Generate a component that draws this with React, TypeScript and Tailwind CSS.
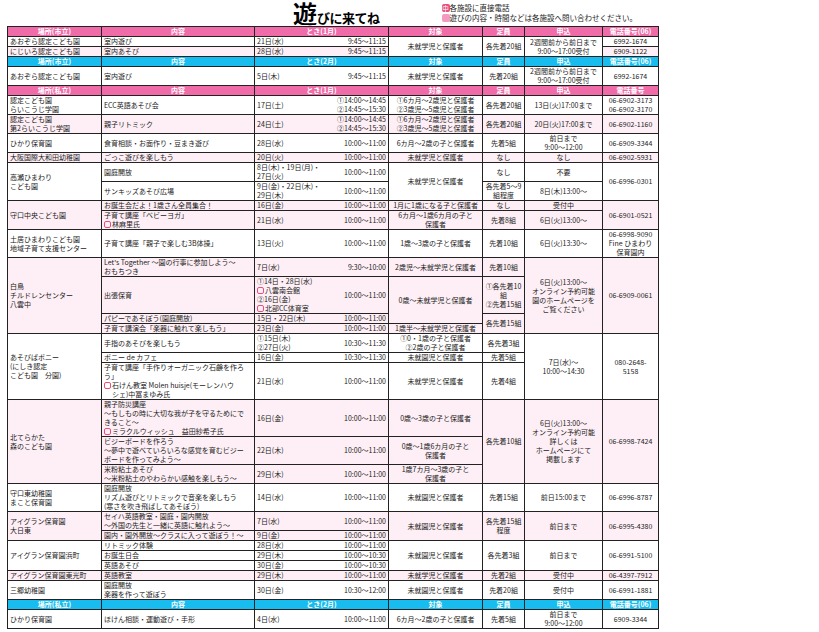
import React from 'react';

type Align = 'l' | 'c' | 'r';

// one table cell, every border black
function C({
  children,
  rs,
  cs,
  a = 'l',
  x = '',
}: {
  children?: React.ReactNode;
  rs?: number;
  cs?: number;
  a?: Align;
  x?: string;
}) {
  const al = a === 'c' ? 'text-center' : a === 'r' ? 'text-right' : 'text-left';
  return (
    <td
      rowSpan={rs}
      colSpan={cs}
      className={`border border-[#222] px-[2px] py-0 align-middle ${al} ${x}`}
    >
      {children}
    </td>
  );
}

// date + time share the "とき" column, no line between them
const D = ({ children }: { children: React.ReactNode }) => (
  <C x="border-r-0 whitespace-nowrap overflow-visible">{children}</C>
);
const T = ({ children }: { children: React.ReactNode }) => (
  <C a="r" x="border-l-0 whitespace-nowrap">
    {children}
  </C>
);

// little pink box in front of a lecturer / venue
const M = () => (
  <span className="mr-[1px] inline-block h-[7px] w-[7px] rounded-[2px] border border-[#e94f7d] align-[-1px]" />
);

function Head({ cyan, place, month, tel }: { cyan?: boolean; place: string; month: string; tel: string }) {
  const th = cyan
    ? 'border border-[#222] bg-[#18bcee] py-0 text-center font-bold text-white'
    : 'border border-[#222] bg-[#f06ca8] py-0 text-center font-bold text-white';
  return (
    <tr>
      <th className={th}>{place}</th>
      <th className={th}>内容</th>
      <th colSpan={2} className={th}>
        とき({month})
      </th>
      <th className={th}>対象</th>
      <th className={th}>定員</th>
      <th className={th}>申込</th>
      <th className={th}>{tel}</th>
    </tr>
  );
}

const P = 'bg-[#fdeff5]';

export default function App() {
  return (
    <div className="h-[632px] w-[819px] overflow-hidden bg-white pl-[7px] font-['Noto_Sans_CJK_JP',sans-serif] text-[#222]">
      <div className="flex h-[26px] items-start">
        <div className="ml-[286px] flex h-[25px] items-end font-bold text-black">
          <span className="text-[24px] leading-[24px]">遊</span>
          <span className="text-[13px] leading-[14px] tracking-[-0.5px]">びに来てね</span>
        </div>
        <div className="ml-[62px] mt-[4px] flex flex-col gap-[2px] text-[7.5px] leading-[8px]">
          <div className="flex items-center">
            <span className="flex h-[8px] w-[8px] items-center justify-center rounded-[2px] bg-[#e94f7d] text-[6.5px] text-white">
              中
            </span>
            <span>各施設に直接電話</span>
          </div>
          <div className="flex items-center">
            <span className="h-[8px] w-[8px] rounded-[2px] bg-[#f49ac0]" />
            <span>遊びの内容・時間などは各施設へ問い合わせください。</span>
          </div>
        </div>
      </div>

      <table className="w-[651px] table-fixed border-collapse text-[7px] leading-[9px]">
        <colgroup>
          <col className="w-[94px]" />
          <col className="w-[153px]" />
          <col className="w-[56px]" />
          <col className="w-[78px]" />
          <col className="w-[94px]" />
          <col className="w-[42px]" />
          <col className="w-[78px]" />
          <col className="w-[56px]" />
        </colgroup>
        <tbody>
          <Head place="場所(市立)" month="1月" tel="電話番号(06)" />
          <tr>
            <C>あおぞら認定こども園</C>
            <C>室内遊び</C>
            <D>21日(水)</D>
            <T>9:45～11:15</T>
            <C rs={2} a="c" x="bg-white">未就学児と保護者</C>
            <C rs={2} a="c" x="bg-white">各先着20組</C>
            <C rs={2} a="c" x="bg-white">
              2週間前から前日まで
              <br />
              9:00～17:00受付
            </C>
            <C a="c">6992-1674</C>
          </tr>
          <tr className={P}>
            <C>にじいろ認定こども園</C>
            <C>室内あそび</C>
            <D>28日(水)</D>
            <T>9:45～11:15</T>
            <C a="c">6909-1122</C>
          </tr>

          <Head cyan place="場所(市立)" month="2月" tel="電話番号(06)" />
          <tr>
            <C>あおぞら認定こども園</C>
            <C>室内遊び</C>
            <D>5日(木)</D>
            <T>9:45～11:15</T>
            <C a="c">未就学児と保護者</C>
            <C a="c">先着20組</C>
            <C a="c">
              2週間前から前日まで
              <br />
              9:00～17:00受付
            </C>
            <C a="c">6992-1674</C>
          </tr>

          <Head place="場所(私立)" month="1月" tel="電話番号" />
          <tr>
            <C>
              認定こども園
              <br />
              らいこうじ学園
            </C>
            <C>ECC英語あそび会</C>
            <D>17日(土)</D>
            <T>
              ①14:00～14:45
              <br />
              ②14:45～15:30
            </T>
            <C a="c">
              ①6カ月～2歳児と保護者
              <br />
              ②3歳児～5歳児と保護者
            </C>
            <C a="c">各先着20組</C>
            <C a="c">13日(火)17:00まで</C>
            <C a="c">
              06-6902-3173
              <br />
              06-6902-3170
            </C>
          </tr>
          <tr className={P}>
            <C>
              認定こども園
              <br />
              第2らいこうじ学園
            </C>
            <C>親子リトミック</C>
            <D>24日(土)</D>
            <T>
              ①14:00～14:45
              <br />
              ②14:45～15:30
            </T>
            <C a="c">
              ①6カ月～2歳児と保護者
              <br />
              ②3歳児～5歳児と保護者
            </C>
            <C a="c">各先着20組</C>
            <C a="c">20日(火)17:00まで</C>
            <C a="c">06-6902-1160</C>
          </tr>
          <tr>
            <C>ひかり保育園</C>
            <C>食育相談・お面作り・豆まき遊び</C>
            <D>28日(水)</D>
            <T>10:00～11:00</T>
            <C a="c">6カ月～2歳の子と保護者</C>
            <C a="c">先着5組</C>
            <C a="c">
              前日まで
              <br />
              9:00～12:00
            </C>
            <C a="c">06-6909-3344</C>
          </tr>
          <tr className={P}>
            <C>大阪国際大和田幼稚園</C>
            <C>ごっこ遊びを楽しもう</C>
            <D>20日(火)</D>
            <T>10:00～11:00</T>
            <C a="c">未就学児と保護者</C>
            <C a="c">なし</C>
            <C a="c">なし</C>
            <C a="c">06-6902-5931</C>
          </tr>
          <tr>
            <C rs={2}>
              高瀬ひまわり
              <br />
              こども園
            </C>
            <C>園庭開放</C>
            <D>
              8日(木)・19日(月)・
              <br />
              27日(火)
            </D>
            <T>10:00～11:00</T>
            <C rs={2} a="c">未就学児と保護者</C>
            <C a="c">なし</C>
            <C a="c">不要</C>
            <C rs={2} a="c">06-6996-0301</C>
          </tr>
          <tr>
            <C>サンキッズあそび広場</C>
            <D>
              9日(金)・22日(木)・
              <br />
              29日(木)
            </D>
            <T>10:00～11:00</T>
            <C a="c">
              各先着5～9
              <br />
              組程度
            </C>
            <C a="c">8日(木)13:00～</C>
          </tr>
          <tr className={P}>
            <C rs={2}>守口中央こども園</C>
            <C>お誕生会だよ！1歳さん全員集合！</C>
            <D>16日(金)</D>
            <T>10:00～11:00</T>
            <C a="c">1月に1歳になる子と保護者</C>
            <C a="c">なし</C>
            <C a="c">受付中</C>
            <C rs={2} a="c">06-6901-0521</C>
          </tr>
          <tr className={P}>
            <C>
              子育て講座「ベビーヨガ」
              <br />
              <M />
              林麻里氏
            </C>
            <D>21日(水)</D>
            <T>10:00～11:00</T>
            <C a="c">
              6カ月～1歳6カ月の子と
              <br />
              保護者
            </C>
            <C a="c">先着8組</C>
            <C a="c">6日(火)13:00～</C>
          </tr>
          <tr>
            <C>
              土居ひまわりこども園
              <br />
              地域子育て支援センター
            </C>
            <C>子育て講座「親子で楽しむ3B体操」</C>
            <D>13日(火)</D>
            <T>10:00～11:00</T>
            <C a="c">1歳～3歳の子と保護者</C>
            <C a="c">先着10組</C>
            <C a="c">6日(火)13:30～</C>
            <C a="c">
              06-6998-9090
              <br />
              Fine ひまわり
              <br />
              保育園内
            </C>
          </tr>
          <tr className={P}>
            <C rs={4}>
              白鳥
              <br />
              チルドレンセンター
              <br />
              八雲中
            </C>
            <C>
              Let's Together ～園の行事に参加しよう～
              <br />
              おもちつき
            </C>
            <D>7日(水)</D>
            <T>9:30～10:00</T>
            <C a="c">2歳児～未就学児と保護者</C>
            <C a="c">先着10組</C>
            <C rs={4} a="c">
              6日(火)13:00～
              <br />
              オンライン予約可能
              <br />
              園のホームページを
              <br />
              ご覧ください
            </C>
            <C rs={4} a="c">06-6909-0061</C>
          </tr>
          <tr className={P}>
            <C>出張保育</C>
            <D>
              ①14日・28日(水)
              <br />
              <M />
              八雲南会館
              <br />
              ②16日(金)
              <br />
              <M />
              北部CC体育室
            </D>
            <T>10:00～11:00</T>
            <C rs={2} a="c">0歳～未就学児と保護者</C>
            <C a="c">
              ①各先着10
              <br />
              組
              <br />
              ②先着15組
            </C>
          </tr>
          <tr className={P}>
            <C>パピーであそぼう(園庭開放)</C>
            <D>15日・22日(木)</D>
            <T>10:00～11:00</T>
            <C rs={2} a="c">各先着15組</C>
          </tr>
          <tr className={P}>
            <C>子育て講演会「楽器に触れて楽しもう」</C>
            <D>23日(金)</D>
            <T>10:00～11:00</T>
            <C a="c">1歳半～未就学児と保護者</C>
          </tr>
          <tr>
            <C rs={3}>
              あそびばポニー
              <br />
              (にしき認定
              <br />
              こども園　分園)
            </C>
            <C>手指のあそびを楽しもう</C>
            <D>
              ①15日(木)
              <br />
              ②27日(火)
            </D>
            <T>10:30～11:30</T>
            <C a="c">
              ①0・1歳の子と保護者
              <br />
              ②2歳の子と保護者
            </C>
            <C a="c">各先着3組</C>
            <C rs={3} a="c">
              7日(水)～
              <br />
              10:00～14:30
            </C>
            <C rs={3} a="c">
              080-2648-
              <br />
              5158
            </C>
          </tr>
          <tr>
            <C>ポニー de カフェ</C>
            <D>16日(金)</D>
            <T>10:30～11:30</T>
            <C a="c">未就園児と保護者</C>
            <C a="c">先着5組</C>
          </tr>
          <tr>
            <C>
              子育て講座「手作りオーガニック石鹸を作ろ
              <br />
              う」
              <br />
              <M />
              石けん教室 Molen huisje(モーレンハウ
              <br />
              <span className="pl-[8px]">シェ)中冨まゆみ氏</span>
            </C>
            <D>21日(水)</D>
            <T>10:00～11:00</T>
            <C a="c">未就学児と保護者</C>
            <C a="c">先着4組</C>
          </tr>
          <tr className={P}>
            <C rs={3}>
              北てらかた
              <br />
              森のこども園
            </C>
            <C>
              親子防災講座
              <br />
              ～もしもの時に大切な我が子を守るためにで
              <br />
              きること～
              <br />
              <M />
              ミラクルウィッシュ　益田紗希子氏
            </C>
            <D>16日(金)</D>
            <T>10:00～11:00</T>
            <C a="c">0歳～3歳の子と保護者</C>
            <C rs={3} a="c">各先着10組</C>
            <C rs={3} a="c">
              6日(火)13:00～
              <br />
              オンライン予約可能
              <br />
              詳しくは
              <br />
              ホームページにて
              <br />
              掲載します
            </C>
            <C rs={3} a="c">06-6998-7424</C>
          </tr>
          <tr className={P}>
            <C>
              ビジーボードを作ろう
              <br />
              ～夢中で遊べていろいろな感覚を育むビジー
              <br />
              ボードを作ってみよう～
            </C>
            <D>22日(木)</D>
            <T>10:00～11:00</T>
            <C a="c">
              0歳～1歳6カ月の子と
              <br />
              保護者
            </C>
          </tr>
          <tr className={P}>
            <C>
              米粉粘土あそび
              <br />
              ～米粉粘土のやわらかい感触を楽しもう～
            </C>
            <D>29日(木)</D>
            <T>10:00～11:00</T>
            <C a="c">
              1歳7カ月～3歳の子と
              <br />
              保護者
            </C>
          </tr>
          <tr>
            <C>
              守口東幼稚園
              <br />
              まこと保育園
            </C>
            <C>
              園庭開放
              <br />
              リズム遊びとリトミックで音楽を楽しもう
              <br />
              (寒さを吹き飛ばしてあそぼう)
            </C>
            <D>14日(水)</D>
            <T>10:00～11:00</T>
            <C a="c">未就園児と保護者</C>
            <C a="c">先着15組</C>
            <C a="c">前日15:00まで</C>
            <C a="c">06-6996-8787</C>
          </tr>
          <tr className={P}>
            <C rs={2}>
              アイグラン保育園
              <br />
              大日東
            </C>
            <C>
              セイハ英語教室・園庭・園内開放
              <br />
              ～外国の先生と一緒に英語に触れよう～
            </C>
            <D>7日(水)</D>
            <T>10:00～11:00</T>
            <C rs={2} a="c">未就園児と保護者</C>
            <C rs={2} a="c">
              各先着15組
              <br />
              程度
            </C>
            <C rs={2} a="c">前日まで</C>
            <C rs={2} a="c">06-6995-4380</C>
          </tr>
          <tr className={P}>
            <C>園内・園外開放～クラスに入って遊ぼう！～</C>
            <D>9日(金)</D>
            <T>10:00～11:00</T>
          </tr>
          <tr>
            <C rs={3}>アイグラン保育園浜町</C>
            <C>リトミック体験</C>
            <D>28日(水)</D>
            <T>10:00～11:00</T>
            <C rs={3} a="c">未就園児と保護者</C>
            <C rs={3} a="c">各先着3組</C>
            <C rs={3} a="c">前日まで</C>
            <C rs={3} a="c">06-6991-5100</C>
          </tr>
          <tr>
            <C>お誕生日会</C>
            <D>29日(木)</D>
            <T>10:00～10:30</T>
          </tr>
          <tr>
            <C>英語あそび</C>
            <D>30日(金)</D>
            <T>10:00～10:30</T>
          </tr>
          <tr className={P}>
            <C>アイグラン保育園東光町</C>
            <C>英語教室</C>
            <D>29日(木)</D>
            <T>10:00～11:00</T>
            <C a="c">未就学児と保護者</C>
            <C a="c">先着2組</C>
            <C a="c">受付中</C>
            <C a="c">06-4397-7912</C>
          </tr>
          <tr>
            <C>三郷幼稚園</C>
            <C>
              園庭開放
              <br />
              楽器を作って遊ぼう
            </C>
            <D>30日(金)</D>
            <T>10:30～12:00</T>
            <C a="c">未就園児と保護者</C>
            <C a="c">先着20組</C>
            <C a="c">受付中</C>
            <C a="c">06-6991-1881</C>
          </tr>

          <Head cyan place="場所(私立)" month="2月" tel="電話番号(06)" />
          <tr>
            <C>ひかり保育園</C>
            <C>ほけん相談・運動遊び・手形</C>
            <D>4日(水)</D>
            <T>10:00～11:00</T>
            <C a="c">6カ月～2歳の子と保護者</C>
            <C a="c">先着5組</C>
            <C a="c">
              前日まで
              <br />
              9:00～12:00
            </C>
            <C a="c">6909-3344</C>
          </tr>
        </tbody>
      </table>
    </div>
  );
}
